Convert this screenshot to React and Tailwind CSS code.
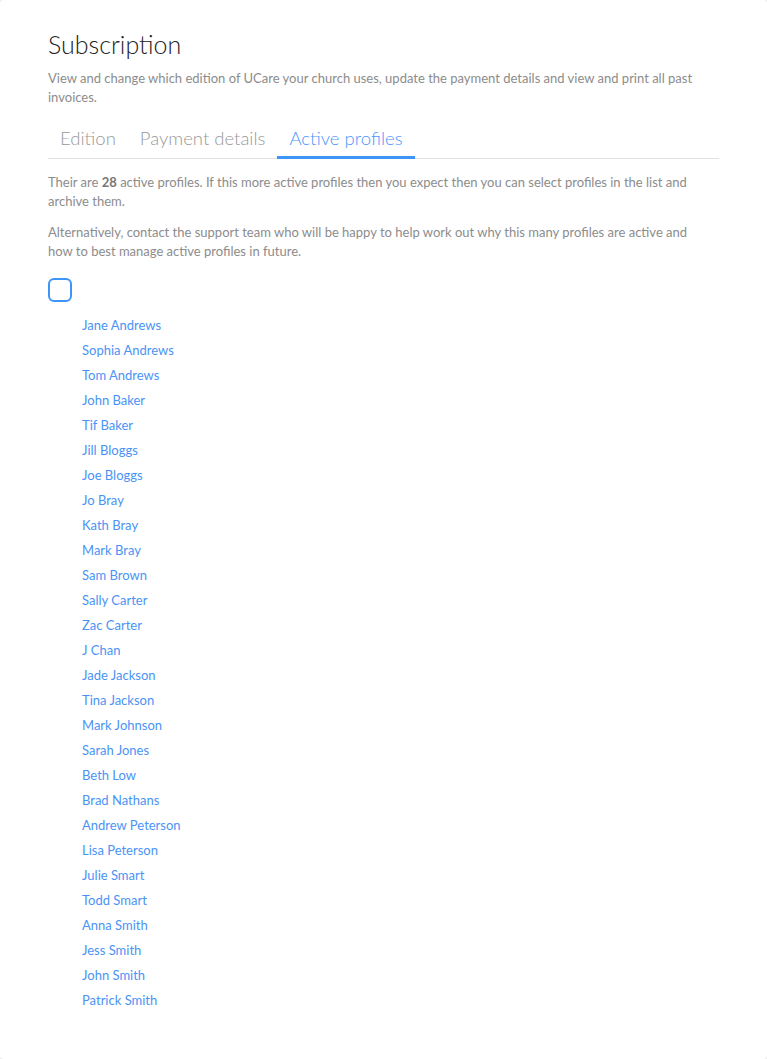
import React from "react";

const names = [
  "Jane Andrews","Sophia Andrews","Tom Andrews","John Baker","Tif Baker","Jill Bloggs","Joe Bloggs","Jo Bray","Kath Bray","Mark Bray","Sam Brown","Sally Carter","Zac Carter","J Chan","Jade Jackson","Tina Jackson","Mark Johnson","Sarah Jones","Beth Low","Brad Nathans","Andrew Peterson","Lisa Peterson","Julie Smart","Todd Smart","Anna Smith","Jess Smith","John Smith","Patrick Smith",
];

export default function App() {
  return (
    <div className="min-h-[1059px] bg-[#eeeeee] font-['Lato',sans-serif]">
      <div className="min-h-[1059px] bg-white rounded-[4px] px-12 pt-[27px] pb-10">
        <h1 className="text-[25px] font-light leading-[34px] text-[#222]">Subscription</h1>
        <p className="mt-[8px] max-w-[655px] text-[13px] leading-[19px] text-[#8c8c8c]">
          View and change which edition of UCare your church uses, update the payment details and view and print all past invoices.
        </p>
        <div className="mt-[18px] flex border-b border-[#e2e2e2]">
          <div className="px-3 pb-[3px] text-[18.5px] font-light leading-[27px] text-[#999] border-b-[3px] border-transparent">Edition</div>
          <div className="px-3 pb-[3px] text-[18.5px] font-light leading-[27px] text-[#999] border-b-[3px] border-transparent">Payment details</div>
          <div className="px-3 pb-[3px] text-[18.5px] font-light leading-[27px] text-[#4a96fb] border-b-[3px] border-[#3d95f7] -mb-px">Active profiles</div>
        </div>
        <p className="mt-[14px] max-w-[655px] text-[13px] leading-[19px] text-[#8c8c8c]">
          Their are <span className="font-bold text-[#777]">28</span> active profiles. If this more active profiles then you expect then you can select profiles in the list and archive them.
        </p>
        <p className="mt-[12px] max-w-[655px] text-[13px] leading-[19px] text-[#8c8c8c]">
          Alternatively, contact the support team who will be happy to help work out why this many profiles are active and how to best manage active profiles in future.
        </p>
        <div className="mt-[17px] w-6 h-6 rounded-[6px] border-2 border-[#3d95f7]"></div>
        <ul className="mt-[11px] pl-[34px]">
          {names.map((n) => (
            <li key={n} className="text-[13px] leading-[25px] text-[#4a93f5]">{n}</li>
          ))}
        </ul>
      </div>
    </div>
  );
}
